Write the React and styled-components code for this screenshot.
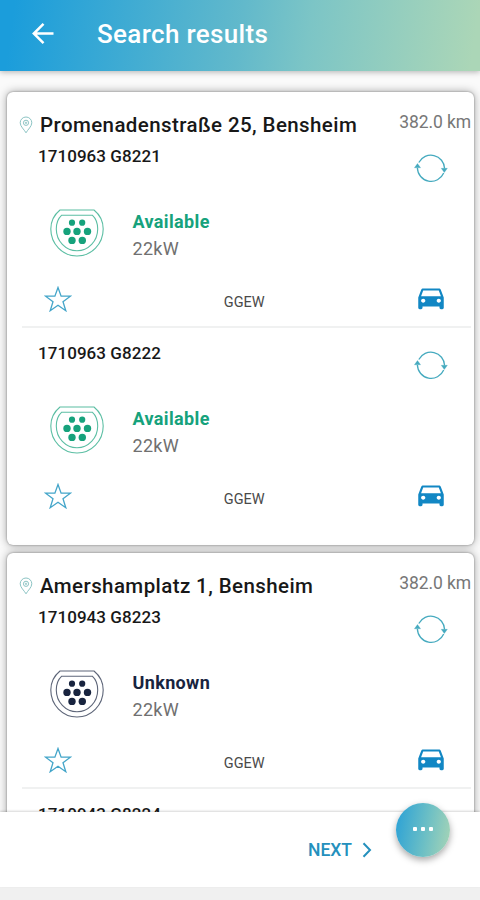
import React from 'react';
import styled, { createGlobalStyle } from 'styled-components';
import { MdDirectionsCar } from 'react-icons/md';

const stations = [
  {
    address: 'Promenadenstraße 25, Bensheim',
    distance: '382.0 km',
    points: [
      { id: '1710963 G8221', status: 'Available', power: '22kW', operator: 'GGEW' },
      { id: '1710963 G8222', status: 'Available', power: '22kW', operator: 'GGEW' },
    ],
  },
  {
    address: 'Amershamplatz 1, Bensheim',
    distance: '382.0 km',
    points: [
      { id: '1710943 G8223', status: 'Unknown', power: '22kW', operator: 'GGEW' },
      { id: '1710943 G8224' },
    ],
  },
];

const statusColors = {
  Available: '#16a27c',
  Unknown: '#18243f',
};

const BackIcon = () => (
  <svg width="24" height="24" viewBox="0 0 24 24" fill="none" stroke="#fff" strokeWidth="2.5">
    <path d="M22.500 11.500H3M12.500 1.800L2.800 11.500l9.700 9.700" />
  </svg>
);

const PinIcon = () => (
  <svg width="14" height="18" viewBox="0 0 14 18" fill="none" stroke="#8cc4c4" strokeWidth="1">
    <path d="M7 16.8C5.200 13.500 1.200 10.500 1.200 6.800a5.800 5.800 0 0 1 11.600 0C12.800 10.500 8.800 13.500 7 16.800z" />
    <circle cx="7" cy="6.800" r="2.600" />
    <circle cx="7" cy="6.800" r="0.700" />
  </svg>
);

const RefreshIcon = () => (
  <svg width="34" height="30" viewBox="0 0 34 30" fill="none" stroke="#45aabf" strokeWidth="1.300">
    <path d="M3.400 15A13.700 13.700 0 0 0 29.700 20" />
    <path d="M4.800 9.500A13.700 13.700 0 0 1 30.600 15.500" />
    <path d="M3.500 10.500L6.600 14.800H0.400z M30.300 19.500L27.200 15.300H33.400z" fill="#45aabf" strokeWidth="0.300" />
  </svg>
);

const PlugIcon = ({ color }) => (
  <svg width="56" height="50" viewBox="0 0 56 50" fill="none" stroke={color} strokeWidth="1.100">
    <path d="M11 2H45C50.500 6.500 54.200 13.500 54.200 21A26.200 27 0 0 1 1.800 21C1.800 13.500 5.500 6.500 11 2z" opacity="0.700" />
    <path d="M12.500 7.300H43.500C47 10.500 48.700 15.500 48.700 21A20.700 21.800 0 0 1 7.300 21C7.300 15.500 9 10.500 12.500 7.300z" opacity="0.700" />
    <g fill={color} stroke="none">
      <circle cx="23" cy="14.700" r="3.100" />
      <circle cx="33.200" cy="14.700" r="3.100" />
      <circle cx="18" cy="23.400" r="3.700" />
      <circle cx="28" cy="23.400" r="3.700" />
      <circle cx="38.500" cy="23.400" r="3.700" />
      <circle cx="23" cy="32.400" r="3.700" />
      <circle cx="33.300" cy="32.400" r="3.700" />
    </g>
  </svg>
);

const StarIcon = () => (
  <svg width="28" height="26" viewBox="0 0 28 26" fill="none" stroke="#43a5c9" strokeWidth="1.300">
    <path d="M14 1.500l3.100 8.700h9.300l-7.400 5.500 2.800 9-7.800-5.400-7.800 5.400 2.800-9-7.400-5.500h9.300z" />
  </svg>
);

const ChevronIcon = () => (
  <svg width="10" height="16" viewBox="0 0 10 16" fill="none" stroke="#2490bd" strokeWidth="2">
    <path d="M1.500 1.300L8 8l-6.500 6.700" />
  </svg>
);

const ChargePoint = ({ point }) => (
  <PointItem>
    <PointHeader>
      <PointId>{point.id}</PointId>
      <RefreshButton><RefreshIcon /></RefreshButton>
    </PointHeader>

    {point.status && (
      <PointDetails>
        <PlugIcon color={statusColors[point.status]} />
        <div>
          <Status $color={statusColors[point.status]}>{point.status}</Status>
          <Power>{point.power}</Power>
        </div>
      </PointDetails>
    )}

    {point.operator && (
      <PointActions>
        <StarIcon />
        <Operator>{point.operator}</Operator>
        <CarIcon preserveAspectRatio="none" />
      </PointActions>
    )}
  </PointItem>
);

export default function App() {
  return (
    <Screen>
      <GlobalStyle />
      <Toolbar>
        <BackIcon />
        <Title>Search results</Title>
      </Toolbar>

      <Results>
        {stations.map((station) => (
          <StationCard key={station.address}>
            <StationHeader>
              <PinIcon />
              <Address>{station.address}</Address>
              <Distance>{station.distance}</Distance>
            </StationHeader>
            {station.points.map((point) => <ChargePoint key={point.id} point={point} />)}
          </StationCard>
        ))}
      </Results>

      <Footer>
        <NextButton>NEXT <ChevronIcon /></NextButton>
        <MoreButton>
          <Dot />
          <Dot />
          <Dot />
        </MoreButton>
      </Footer>
      <SystemBar />
    </Screen>
  )
}

const GlobalStyle = createGlobalStyle`
  * {
    box-sizing: border-box;
  }
  body {
    margin: 0;
    font-family: Roboto, sans-serif;
  }
  svg {
    display: block;
    flex-shrink: 0;
  }
  button {
    border: none;
    background: none;
    padding: 0;
    font-family: inherit;
  }
`

const Screen = styled.div`
  display: flex;
  flex-direction: column;
  height: 900px;
  overflow: hidden;
  background: #fafafa;
`

const Toolbar = styled.header`
  display: flex;
  align-items: center;
  flex-shrink: 0;
  height: 71px;
  padding: 0 31px 4px;
  background: linear-gradient(98deg, #1b9ddb 3%, #62b9cb 50%, #7cc5c6 64%, #abd6b7 98%);
  box-shadow: 0 1px 6px rgba(0, 0, 0, 0.3);
`

const Title = styled.h1`
  margin: 0 0 0 42px;
  font-size: 26px;
  font-weight: 500;
  line-height: 32px;
  letter-spacing: 0.34px;
  color: #fff;
`

const Results = styled.main`
  display: flex;
  flex-direction: column;
  gap: 8px;
  flex: 1;
  min-height: 0;
  padding: 21px 6px 0 7px;
  overflow: hidden;
`

const StationCard = styled.section`
  flex-shrink: 0;
  height: 453px;
  border-radius: 6px;
  background: #fff;
  box-shadow: 0 0 2px rgba(0, 0, 0, 0.4), 0 0 10px rgba(0, 0, 0, 0.36);
`

const StationHeader = styled.div`
  display: flex;
  height: 38px;
  padding: 24px 3px 0 12px;
`

const Address = styled.h2`
  flex: 1;
  margin: -4px 0 0 7px;
  font-size: 20.5px;
  font-weight: 500;
  line-height: 27px;
  letter-spacing: 0.41px;
  white-space: nowrap;
  color: #181818;
`

const Distance = styled.span`
  margin-top: -5px;
  font-size: 17.5px;
  line-height: 22px;
  letter-spacing: -0.08px;
  color: #777;
`

const PointItem = styled.article`
  height: 196px;
  margin: 0 3px 0 15px;
  padding: 16px 23px 0 16px;

  & + & {
    border-top: 2px solid #f0f1f1;
    padding-top: 15px;
  }
`

const PointHeader = styled.div`
  display: flex;
  justify-content: space-between;
  height: 62px;
`

const PointId = styled.span`
  font-size: 17px;
  font-weight: 500;
  line-height: 20px;
  letter-spacing: 0.06px;
  color: #181818;
`

const RefreshButton = styled.button`
  align-self: flex-start;
  margin-top: 7px;
`

const PointDetails = styled.div`
  display: flex;
  gap: 28px;
  height: 77px;
  padding-left: 10.5px;
`

const Status = styled.div`
  font-size: 18px;
  font-weight: 700;
  line-height: 27px;
  letter-spacing: 0.36px;
  color: ${(props) => props.$color};
`

const Power = styled.div`
  font-size: 18px;
  line-height: 28px;
  letter-spacing: 0.3px;
  color: #707070;
`

const PointActions = styled.div`
  display: flex;
  align-items: center;
  justify-content: space-between;
  height: 28px;
  padding-left: 5.5px;
`

const Operator = styled.span`
  padding: 7px 0 0 3px;
  font-size: 14.5px;
  color: #4a4a4a;
`

const CarIcon = styled(MdDirectionsCar)`
  width: 34px;
  height: 31px;
  margin-top: -4px;
  color: #1287c4;
`

const Footer = styled.footer`
  display: flex;
  justify-content: flex-end;
  flex-shrink: 0;
  position: relative;
  height: 75px;
  padding: 26px 108px 0 0;
  background: #fff;
  box-shadow: 0 -1px 2px rgba(0, 0, 0, 0.16);
`

const NextButton = styled.button`
  display: flex;
  align-items: center;
  gap: 10px;
  height: 24px;
  font-size: 17.5px;
  font-weight: 500;
  color: #2490bd;
`

/* floats over the list and the footer */
const MoreButton = styled.button`
  display: flex;
  align-items: center;
  justify-content: center;
  gap: 4px;
  position: absolute;
  top: -9px;
  right: 30px;
  width: 54px;
  height: 54px;
  padding-bottom: 3px;
  border-radius: 50%;
  background: linear-gradient(100deg, #2fa3d5 5%, #6cbfc5 55%, #a6d4b6 98%);
  box-shadow: 0 3px 7px rgba(0, 0, 0, 0.35);
`

const Dot = styled.span`
  width: 4px;
  height: 4px;
  border-radius: 1px;
  background: #fff;
`

const SystemBar = styled.div`
  flex-shrink: 0;
  height: 13px;
  background: #f0f0f0;
`
